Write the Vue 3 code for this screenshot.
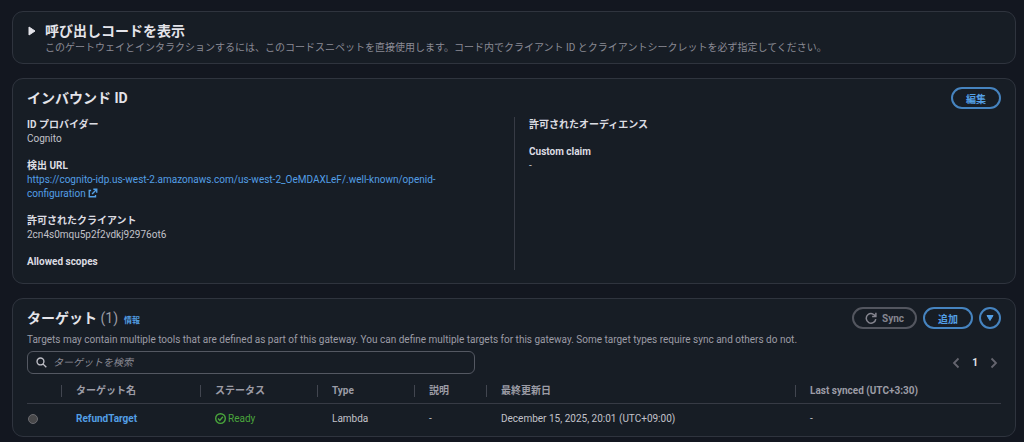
<script setup>
import { ref, computed } from 'vue'

const expanded = ref(false)
const keyword = ref('')
const selected = ref('')
const page = ref(1)

const leftItems = [
  { label: 'ID プロバイダー', value: 'Cognito' },
  {
    label: '検出 URL',
    value: 'https://cognito-idp.us-west-2.amazonaws.com/us-west-2_OeMDAXLeF/.well-known/openid-configuration',
    link: true
  },
  { label: '許可されたクライアント', value: '2cn4s0mqu5p2f2vdkj92976ot6' },
  { label: 'Allowed scopes', value: '' }
]

const rightItems = [
  { label: '許可されたオーディエンス', value: '' },
  { label: 'Custom claim', value: '-' }
]

const columns = [
  { key: 'name', title: 'ターゲット名' },
  { key: 'status', title: 'ステータス' },
  { key: 'type', title: 'Type' },
  { key: 'desc', title: '説明' },
  { key: 'updated', title: '最終更新日' },
  { key: 'synced', title: 'Last synced (UTC+3:30)' }
]

const targets = ref([
  {
    name: 'RefundTarget',
    status: 'Ready',
    type: 'Lambda',
    desc: '-',
    updated: 'December 15, 2025, 20:01 (UTC+09:00)',
    synced: '-'
  }
])

const filtered = computed(() =>
  targets.value.filter((t) => t.name.toLowerCase().includes(keyword.value.toLowerCase()))
)
</script>

<template>
  <main class="page">
    <section class="card snippet">
      <button class="expander" :aria-expanded="expanded" @click="expanded = !expanded">
        <svg class="caret" :class="{ open: expanded }" viewBox="0 0 10 10" aria-hidden="true">
          <path d="M2 1 L8 5 L2 9 Z" fill="currentColor" stroke="currentColor" stroke-linejoin="round" />
        </svg>
        <span class="title">呼び出しコードを表示</span>
      </button>
      <p class="snippet-text">このゲートウェイとインタラクションするには、このコードスニペットを直接使用します。コード内でクライアント ID とクライアントシークレットを必ず指定してください。</p>
    </section>

    <section class="card">
      <header class="card-header">
        <h2 class="title">インバウンド ID</h2>
        <button class="btn">編集</button>
      </header>
      <div class="columns">
        <dl class="column">
          <div v-for="item in leftItems" :key="item.label" class="pair">
            <dt>{{ item.label }}</dt>
            <dd v-if="item.link">
              <a :href="item.value">{{ item.value }}
                <svg class="external" viewBox="0 0 16 16" aria-hidden="true">
                  <path d="M8.500 2H14v5.500M14 2L6.500 9.500M5 4H2v10h10v-3" fill="none" stroke="currentColor" stroke-width="2.200" />
                </svg>
              </a>
            </dd>
            <dd v-else-if="item.value">{{ item.value }}</dd>
          </div>
        </dl>
        <dl class="column">
          <div v-for="item in rightItems" :key="item.label" class="pair">
            <dt>{{ item.label }}</dt>
            <dd v-if="item.value">{{ item.value }}</dd>
          </div>
        </dl>
      </div>
    </section>

    <section class="card targets">
      <header class="card-header">
        <div class="heading">
          <h2 class="title">ターゲット <span class="counter">({{ targets.length }})</span></h2>
          <a class="info" href="#">情報</a>
        </div>
        <div class="actions">
          <button class="btn btn-muted">
            <svg class="sync" viewBox="0 0 16 16" aria-hidden="true">
              <path d="M14.500 1v5h-5M14 6A6.400 6.400 0 1 0 14.400 9.500" fill="none" stroke="currentColor" stroke-width="2" />
            </svg>
            Sync
          </button>
          <button class="btn">追加</button>
          <button class="btn btn-round" aria-label="その他">
            <svg class="down" viewBox="0 0 8 8" aria-hidden="true">
              <path d="M1 1.500h6L4 6.500z" fill="currentColor" stroke="currentColor" stroke-linejoin="round" />
            </svg>
          </button>
        </div>
      </header>
      <p class="targets-text">Targets may contain multiple tools that are defined as part of this gateway. You can define multiple targets for this gateway. Some target types require sync and others do not.</p>

      <div class="toolbar">
        <label class="search">
          <svg class="search-icon" viewBox="0 0 16 16" aria-hidden="true">
            <path d="M11.500 6.500a5 5 0 1 1-10 0a5 5 0 0 1 10 0zM10 10l5 5" fill="none" stroke="currentColor" stroke-width="2" />
          </svg>
          <input v-model="keyword" type="search" placeholder="ターゲットを検索" aria-label="ターゲットを検索" />
        </label>
        <nav class="pagination">
          <button class="arrow" aria-label="前のページ" disabled>
            <svg viewBox="0 0 8 12" aria-hidden="true">
              <path d="M6.500 1.500L2 6l4.500 4.500" fill="none" stroke="currentColor" stroke-width="1.800" />
            </svg>
          </button>
          <button class="page-number">{{ page }}</button>
          <button class="arrow" aria-label="次のページ" disabled>
            <svg viewBox="0 0 8 12" aria-hidden="true">
              <path d="M1.500 1.500L6 6l-4.500 4.500" fill="none" stroke="currentColor" stroke-width="1.800" />
            </svg>
          </button>
        </nav>
      </div>

      <table>
        <colgroup>
          <col class="col-select" />
          <col v-for="col in columns" :key="col.key" :class="'col-' + col.key" />
        </colgroup>
        <thead>
          <tr>
            <th></th>
            <th v-for="col in columns" :key="col.key" scope="col">
              <span class="th-label">{{ col.title }}</span>
            </th>
          </tr>
        </thead>
        <tbody>
          <tr v-for="row in filtered" :key="row.name">
            <td class="select-cell">
              <input v-model="selected" type="radio" name="target" :value="row.name" :aria-label="row.name" />
            </td>
            <td><a class="name" href="#">{{ row.name }}</a></td>
            <td>
              <span class="status">
                <svg viewBox="0 0 16 16" aria-hidden="true">
                  <circle cx="8" cy="8" r="7" fill="none" stroke="currentColor" stroke-width="2" />
                  <path d="M4.500 8l2.500 2.800L11.500 5.500" fill="none" stroke="currentColor" stroke-width="2" />
                </svg>
                {{ row.status }}
              </span>
            </td>
            <td>{{ row.type }}</td>
            <td>{{ row.desc }}</td>
            <td>{{ row.updated }}</td>
            <td>{{ row.synced }}</td>
          </tr>
        </tbody>
      </table>
    </section>
  </main>
</template>

<style>
body {
  background: #131720;
}
</style>

<style scoped>
.page {
  display: flex;
  flex-direction: column;
  gap: 14px;
  padding: 11px 8px 5px 12px;
  font-family: Roboto, 'Noto Sans CJK JP', sans-serif;
  font-size: 10px;
  line-height: 14px;
  color: #c2c2ca;
}

.card {
  padding: 8px 14px 13px;
  background: #171d25;
  border: 1px solid #2f343e;
  border-radius: 11px;
}

.title {
  margin: 0;
  font-size: 14px;
  line-height: 18px;
  font-weight: 700;
  color: #e4e4ea;
}

button {
  font-family: inherit;
  cursor: pointer;
}

a {
  color: #539fe5;
  text-decoration: none;
}

p,
dl,
dd {
  margin: 0;
}

.snippet {
  padding: 10px 14px 8px;
}

.expander {
  display: flex;
  align-items: center;
  gap: 8px;
  padding: 0;
  border: none;
  background: none;
  color: #e4e4ea;
}

.caret {
  width: 10px;
  height: 10px;
}

.caret.open {
  transform: rotate(90deg);
}

.snippet-text {
  margin-top: 1px;
  padding-left: 18px;
  color: #8b8b95;
}

.card-header {
  display: flex;
  align-items: center;
  justify-content: space-between;
}

.btn {
  display: flex;
  align-items: center;
  justify-content: center;
  gap: 5px;
  min-width: 50px;
  height: 22px;
  padding: 0 13px;
  border: 2px solid #4684c0;
  border-radius: 11px;
  background: none;
  color: #539fe5;
  font-size: 10px;
  font-weight: 700;
}

.btn-muted {
  padding: 0 11px;
  border-color: #53565f;
  color: #85858f;
}

.btn-round {
  min-width: 22px;
  padding: 0;
}

.sync {
  width: 12px;
  height: 12px;
}

.down {
  width: 8px;
  height: 8px;
}

.columns {
  display: grid;
  grid-template-columns: 1fr 1fr;
  margin-top: 8px;
}

.column {
  display: flex;
  flex-direction: column;
  gap: 13px;
  padding: 1px 28px 1px 0;
}

.column + .column {
  padding-left: 14px;
  border-left: 1px solid #373b45;
}

.pair dt {
  font-weight: 700;
  color: #dcdce2;
}

.external {
  width: 10px;
  height: 10px;
  vertical-align: -1px;
}

.heading {
  display: flex;
  align-items: baseline;
  gap: 6px;
}

.counter {
  font-weight: 400;
  color: #9c9ca6;
}

.info {
  font-size: 8px;
  font-weight: 700;
}

.actions {
  display: flex;
  gap: 6px;
}

.targets-text {
  margin-top: 4px;
  color: #9c9ca6;
}

.targets {
  padding-bottom: 3px;
}

.toolbar {
  display: flex;
  align-items: center;
  justify-content: space-between;
  margin-top: 4px;
}

.search {
  display: flex;
  align-items: center;
  gap: 6px;
  box-sizing: border-box;
  width: 46%;
  height: 23px;
  padding: 0 8px;
  border: 1px solid #545862;
  border-radius: 6px;
}

.search-icon {
  width: 11px;
  height: 11px;
  color: #bebec6;
}

.search input {
  flex: 1;
  min-width: 0;
  padding: 0;
  border: none;
  outline: none;
  background: none;
  color: #dcdce2;
  font-family: inherit;
  font-size: 10px;
}

.search input::placeholder {
  color: #8b8b95;
  font-style: italic;
}

.pagination {
  display: flex;
  align-items: center;
  gap: 12px;
  padding-right: 3px;
}

.pagination button {
  display: flex;
  padding: 0;
  border: none;
  background: none;
}

.pagination .arrow {
  color: #65656f;
}

.arrow svg {
  width: 8px;
  height: 12px;
}

.pagination .page-number {
  color: #e4e4ea;
  font-size: 10px;
  font-weight: 700;
}

table {
  width: 100%;
  margin-top: 5px;
  table-layout: fixed;
  border-collapse: collapse;
}

.col-select {
  width: 34px;
}

.col-name {
  width: 139px;
}

.col-status {
  width: 117px;
}

.col-type {
  width: 97px;
}

.col-desc {
  width: 72px;
}

.col-synced {
  width: 206px;
}

th {
  height: 24px;
  padding: 0;
  border-bottom: 1px solid #373b45;
  text-align: left;
  font-weight: 700;
  color: #9c9ca6;
}

.th-label {
  display: block;
  padding-left: 14px;
  border-left: 1px solid #424650;
  line-height: 12px;
}

td {
  height: 29px;
  padding: 0 0 0 15px;
}

.select-cell {
  padding-left: 1px;
}

.select-cell input {
  display: block;
  width: 10px;
  height: 10px;
  margin: 0;
  appearance: none;
  border: 1px solid #6b6b70;
  border-radius: 50%;
  background: #48484a;
}

.select-cell input:checked {
  border: 3px solid #539fe5;
}

.name {
  font-weight: 700;
}

.status {
  display: flex;
  align-items: center;
  gap: 2px;
  color: #4aa53c;
}

.status svg {
  width: 11px;
  height: 11px;
}
</style>
